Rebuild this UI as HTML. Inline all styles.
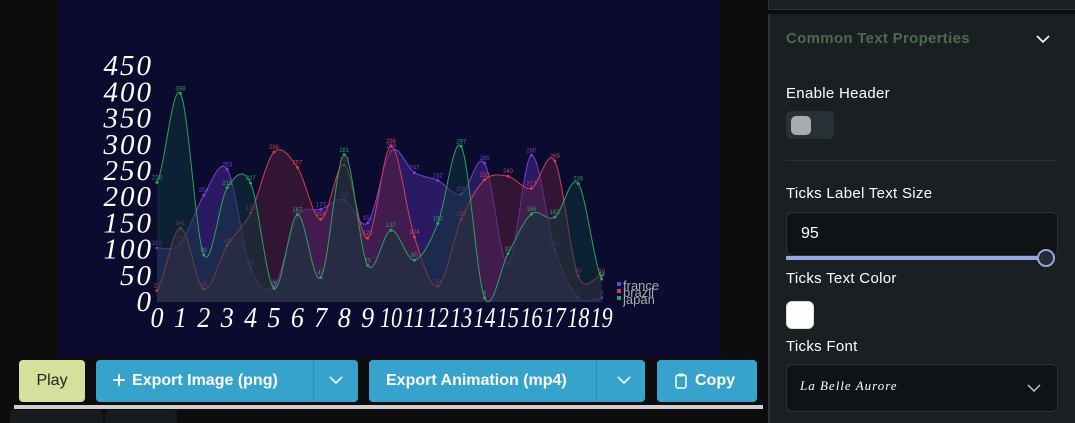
<!DOCTYPE html>
<html><head><meta charset="utf-8"><style>
*{box-sizing:border-box;margin:0;padding:0}
body{width:1075px;height:423px;background:#0d0c0f;position:relative;overflow:hidden;font-family:"Liberation Sans",sans-serif}
.abs{position:absolute}
.btn{position:absolute;top:360px;height:42px;border-radius:4px;background:#36a3cc;color:#fff;font-weight:bold;font-size:16px;display:flex;align-items:center}
.lbl{position:absolute;left:786px;color:#fff;font-size:15px;letter-spacing:0.3px}
</style></head><body>
<div class="abs" style="left:58px;top:0;width:661px;height:357px;background:#0a0b2e"></div>
<svg class="abs" style="left:0;top:0" width="720" height="357" id="ch"></svg>

<div class="abs" style="left:19px;top:360px;width:66px;height:42px;border-radius:4px;background:#d4e09b;color:#222;font-size:16px;display:flex;align-items:center;justify-content:center">Play</div>
<div class="btn" style="left:96px;width:262px"><span style="margin-left:16px;font-size:24px;font-weight:normal;margin-right:6px">+</span>Export Image (png)<span style="position:absolute;left:217px;top:0;height:42px;border-left:1px solid #2e8db3"></span><svg class="abs" style="left:233px;top:15px" width="14" height="10"><path d="M1 2 L7 8 L13 2" stroke="#fff" stroke-width="1.6" fill="none"/></svg></div>
<div class="btn" style="left:369px;width:276px"><span style="margin-left:17px">Export Animation (mp4)</span><span style="position:absolute;left:227px;top:0;height:42px;border-left:1px solid #2e8db3"></span><svg class="abs" style="left:248px;top:15px" width="14" height="10"><path d="M1 2 L7 8 L13 2" stroke="#fff" stroke-width="1.6" fill="none"/></svg></div>
<div class="btn" style="left:657px;width:100px"><svg style="margin-left:18px;margin-right:8px" width="12" height="16"><rect x="1" y="2" width="10" height="13" rx="2" stroke="#fff" stroke-width="1.5" fill="none"/><rect x="3.5" y="0.5" width="5" height="3" rx="1" fill="#fff"/></svg>Copy</div>
<div class="abs" style="left:14px;top:405px;width:749px;height:4px;background:#d0d0d0"></div>
<div class="abs" style="left:10px;top:410px;width:93px;height:13px;background:#161b1d;border-radius:4px 4px 0 0"></div>
<div class="abs" style="left:105px;top:410px;width:72px;height:13px;background:#161b1d;border-radius:4px 4px 0 0"></div>

<div class="abs" style="left:768px;top:0;width:307px;height:10px;background:#1a1f22;border-bottom:1px solid #2b3236;border-left:1px solid #2b3236"></div>
<div class="abs" style="left:768px;top:14px;width:307px;height:409px;background:#1a1f22;border-left:2px solid #2b3236"></div>
<div class="lbl" style="top:30px;color:#4d6a4e;font-weight:bold">Common Text Properties</div>
<svg class="abs" style="left:1036px;top:34px" width="14" height="10"><path d="M1 2 L7 8 L13 2" stroke="#fff" stroke-width="1.6" fill="none"/></svg>
<div class="lbl" style="top:85px">Enable Header</div>
<div class="abs" style="left:786px;top:111px;width:48px;height:28px;border-radius:5px;background:#2a3136"></div>
<div class="abs" style="left:791px;top:116px;width:20px;height:19px;border-radius:5px;background:#a9abae"></div>
<div class="abs" style="left:786px;top:160px;width:272px;height:1px;background:#2c3338"></div>
<div class="lbl" style="top:185px">Ticks Label Text Size</div>
<div class="abs" style="left:786px;top:212px;width:272px;height:44px;border-radius:6px;background:#0f1315;border:1px solid #2c3338;color:#fff;font-size:16px;padding:12px 0 0 14px">95</div>
<div class="abs" style="left:786px;top:256px;width:260px;height:4px;background:#98a6e6"></div>
<div class="abs" style="left:1037px;top:249px;width:18px;height:18px;border-radius:50%;background:#252b34;border:2px solid #98a6e6"></div>
<div class="lbl" style="top:270px">Ticks Text Color</div>
<div class="abs" style="left:786px;top:301px;width:28px;height:28px;border-radius:6px;background:#fff;border:1px solid #ddd"></div>
<div class="lbl" style="top:338px">Ticks Font</div>
<div class="abs" style="left:786px;top:364px;width:272px;height:48px;border-radius:6px;background:#0f1315;border:1px solid #2c3338"></div>
<div class="abs" style="left:800px;top:378px;color:#fff;font-family:'Liberation Serif',serif;font-style:italic;font-size:13px;letter-spacing:1px">La Belle Aurore</div>
<svg class="abs" style="left:1027px;top:383px" width="14" height="10"><path d="M1 2 L7 8 L13 2" stroke="#ccc" stroke-width="1.4" fill="none"/></svg>

<script>
var s=document.getElementById('ch');
function X(i){return 157+i*23.4}function Y(v){return 302-v*0.524}
var series=[
['#4a2a9a','#7a3fd0',[103,112,204,253,65,30,163,177,195,151,288,247,232,206,265,73,280,100,8,8]],
['#5a1e3a','#d04050',[22,141,25,108,170,286,257,158,262,122,298,124,30,158,233,240,217,269,50,50]],
['#0e3a3a','#2ea060',[228,398,90,218,227,26,167,47,281,70,137,80,150,297,8,92,168,162,226,44]]];
var h='';
series.forEach(function(r){var d=r[2],p='M'+X(0)+' '+Y(d[0]);
for(var i=0;i<d.length-1;i++){var p0=d[Math.max(i-1,0)],p1=d[i],p2=d[i+1],p3=d[Math.min(i+2,d.length-1)];
var c1=Y(p1+(p2-p0)/6),c2=Y(p2-(p3-p1)/6);p+=' C'+(X(i)+7.8)+' '+c1+' '+(X(i+1)-7.8)+' '+c2+' '+X(i+1)+' '+Y(p2);}
h+='<path d="'+p+' L'+X(19)+' 302 L'+X(0)+' 302Z" fill="'+r[0]+'" fill-opacity="0.5"/>';
h+='<path d="'+p+'" fill="none" stroke="'+r[1]+'" stroke-width="1"/>';
d.forEach(function(v,i){h+='<circle cx="'+X(i)+'" cy="'+Y(v)+'" r="1.5" fill="'+r[1]+'"/><text x="'+X(i)+'" y="'+(Y(v)-3)+'" font-size="6" fill="'+r[1]+'" text-anchor="middle" font-family="Liberation Sans">'+v+'</text>';});});
for(var v=0;v<=450;v+=50)h+='<text x="153" y="'+(Y(v)+9)+'" text-anchor="end" fill="#fff" font-size="29" font-style="italic" font-family="Liberation Serif" letter-spacing="2">'+v+'</text>';
for(var i=0;i<20;i++)h+='<text x="'+X(i)+'" y="327" text-anchor="middle" fill="#fff" font-size="28" font-style="italic" font-family="Liberation Serif" textLength="'+(i>9?22:13)+'" lengthAdjust="spacingAndGlyphs">'+i+'</text>';
h+='<rect x="617" y="282" width="4" height="4" fill="#7a3fd0"/><rect x="617" y="289" width="4" height="4" fill="#d04050"/><rect x="617" y="296" width="4" height="4" fill="#2ea060"/>';
h+='<g fill="#aaa" font-size="13" font-family="Liberation Sans"><text x="623" y="290">france</text><text x="623" y="297">brazil</text><text x="623" y="304">japan</text></g>';
s.innerHTML=h;
</script>
</body></html>
